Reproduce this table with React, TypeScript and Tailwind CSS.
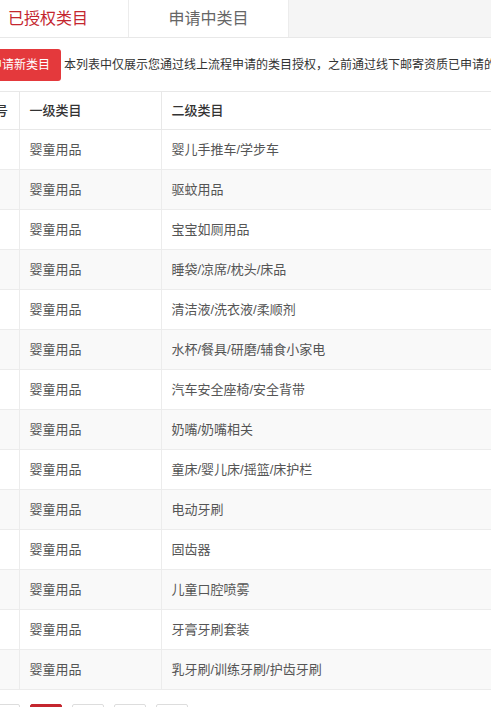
import React from 'react'

const rows = [
  '婴儿手推车/学步车',
  '驱蚊用品',
  '宝宝如厕用品',
  '睡袋/凉席/枕头/床品',
  '清洁液/洗衣液/柔顺剂',
  '水杯/餐具/研磨/辅食小家电',
  '汽车安全座椅/安全背带',
  '奶嘴/奶嘴相关',
  '童床/婴儿床/摇篮/床护栏',
  '电动牙刷',
  '固齿器',
  '儿童口腔喷雾',
  '牙膏牙刷套装',
  '乳牙刷/训练牙刷/护齿牙刷',
]

export default function App() {
  return (
    <div
      className="h-[707px] w-[491px] overflow-hidden bg-white text-[#333]"
      style={{ fontFamily: '"Liberation Sans", "Noto Sans CJK SC", sans-serif' }}
    >
      <div className="-ml-[32px] w-[800px]">
        {/* tabs */}
        <div className="flex h-[38px] border-b border-[#e8e8e8] bg-[#f5f5f5]">
          <div className="flex w-[160px] items-center justify-center bg-white text-[16px] text-[#c4262e]">
            已授权类目
          </div>
          <div className="flex w-[161px] items-center justify-center border-x border-[#ececec] bg-white text-[16px] text-[#666]">
            申请中类目
          </div>
        </div>

        {/* action bar */}
        <div className="mt-[11px] flex items-center pl-[11px]">
          <button className="h-[32px] rounded-[3px] bg-[#e4393c] px-[11px] text-[12px] text-white">
            申请新类目
          </button>
          <span className="ml-[3px] whitespace-nowrap text-[12px] text-[#333]">
            本列表中仅展示您通过线上流程申请的类目授权，之前通过线下邮寄资质已申请的类目不在此列表中展示
          </span>
        </div>

        {/* table */}
        <table className="ml-[4px] mt-[10px] w-[760px] border-collapse text-[13px]">
          <thead>
            <tr className="h-[38px] border-y border-[#e8e8e8]">
              <th className="w-[47px] border-r border-[#e8e8e8] px-[10px] text-left font-medium text-[#333]">序号</th>
              <th className="w-[142px] border-r border-[#e8e8e8] px-[10px] text-left font-medium text-[#333]">一级类目</th>
              <th className="px-[10px] text-left font-medium text-[#333]">二级类目</th>
            </tr>
          </thead>
          <tbody>
            {rows.map((name, i) => (
              <tr
                key={name}
                className={`h-[40px] border-b border-[#ececec] ${i % 2 === 1 ? 'bg-[#f9f9f9]' : 'bg-white'}`}
              >
                <td className="border-r border-[#ececec] px-[10px] text-[#555]">{i + 1}</td>
                <td className="border-r border-[#ececec] px-[10px] text-[#555]">婴童用品</td>
                <td className="px-[10px] text-[#555]">{name}</td>
              </tr>
            ))}
          </tbody>
        </table>

        {/* pagination */}
        <div className="ml-[20px] mt-[14px] flex gap-[10px]">
          <div className="h-[30px] w-[32px] rounded-[2px] border border-[#ddd] bg-white" />
          <div className="h-[30px] w-[32px] rounded-[2px] border border-[#c4262e] bg-[#c4262e]" />
          <div className="h-[30px] w-[32px] rounded-[2px] border border-[#ddd] bg-white" />
          <div className="h-[30px] w-[32px] rounded-[2px] border border-[#ddd] bg-white" />
          <div className="h-[30px] w-[32px] rounded-[2px] border border-[#ddd] bg-white" />
        </div>
      </div>
    </div>
  )
}
